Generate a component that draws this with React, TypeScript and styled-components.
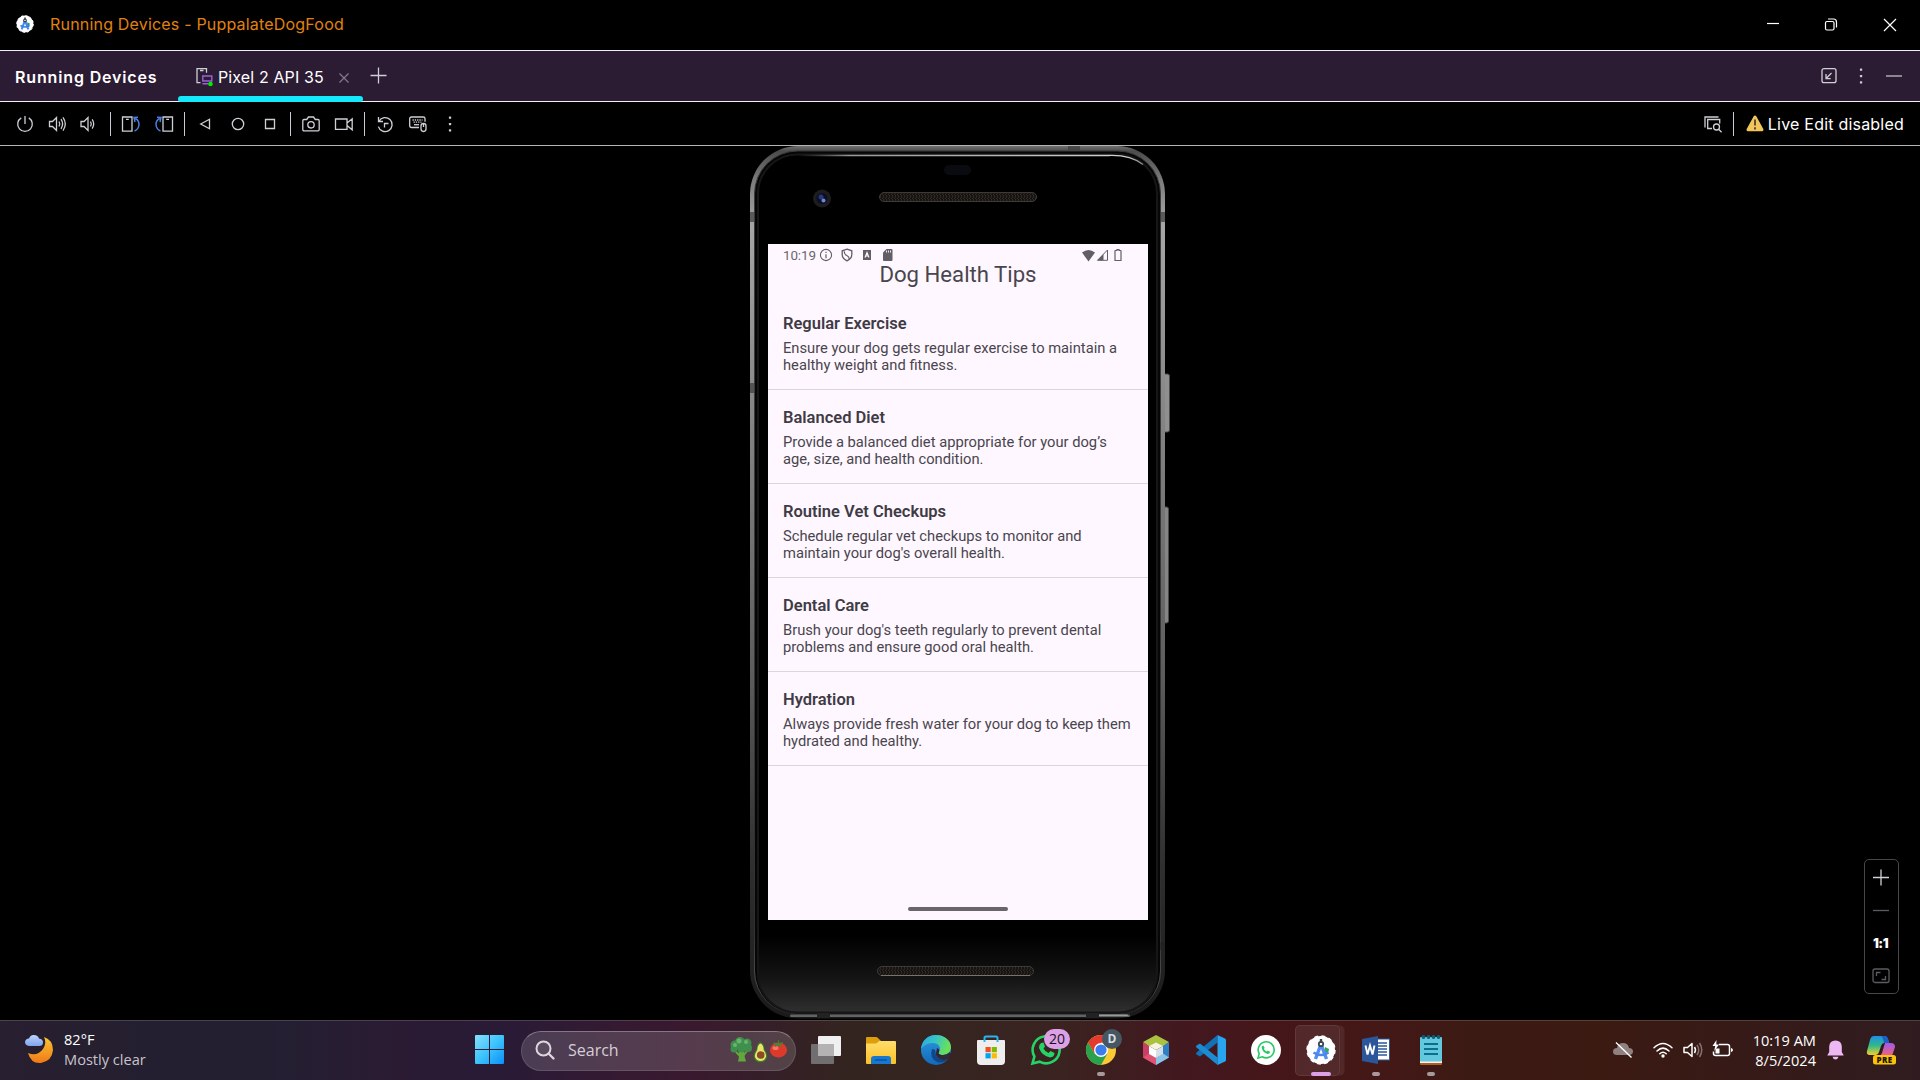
import React from "react";
import styled, { createGlobalStyle } from "styled-components";

const Global = createGlobalStyle`
  * { box-sizing: border-box; }
  html, body { margin: 0; padding: 0; background: #000; overflow: hidden; }
`;

const ui = `Inter, "Liberation Sans", sans-serif`;
const win = `"Open Sans", "Noto Sans", sans-serif`;

const Desktop = styled.div`
  width: 1920px;
  height: 1080px;
  display: flex;
  flex-direction: column;
  background: #000;
  overflow: hidden;
`;

const TitleBar = styled.header`
  height: 51px;
  flex: none;
  display: flex;
  align-items: center;
  padding: 0 23px 2px 16px;
  border-bottom: 1px solid #f2eff3;
`;

const Label = styled.span<{ $size: number; $color?: string; $weight?: number; $ls?: number }>`
  font-family: ${ui};
  font-size: ${(p) => p.$size}px;
  font-weight: ${(p) => p.$weight ?? 400};
  letter-spacing: ${(p) => p.$ls ?? 0}px;
  color: ${(p) => p.$color ?? "#fff"};
  line-height: 20px;
  white-space: nowrap;
`;

const Title = styled(Label)`
  margin-left: 16px;
`;

const Spacer = styled.div`
  flex: 1;
`;

const WindowControls = styled.div`
  display: flex;
  gap: 42.5px;
  align-items: center;
`;

const Icon = styled.svg<{ $w?: number; $h?: number }>`
  display: block;
  flex: none;
  width: ${(p) => p.$w ?? 20}px;
  height: ${(p) => p.$h ?? p.$w ?? 20}px;
  overflow: visible;
`;

const TabBar = styled.nav`
  height: 51px;
  flex: none;
  display: flex;
  background: #2b1b33;
  border-bottom: 1px solid #f2eff3;
`;

const TabHeading = styled.div`
  width: 178px;
  padding: 16px 0 0 15px;
`;

const Tab = styled.div`
  width: 185px;
  height: 50px;
  display: flex;
  align-items: flex-start;
  padding: 16px 0 0 17px;
  position: relative;
  &::after {
    content: "";
    position: absolute;
    left: 0;
    right: 0;
    bottom: -1px;
    height: 6px;
    border-radius: 3px;
    background: #14e8fb;
  }
`;

const TabName = styled(Label)`
  margin-left: 3px;
  width: 119px;
`;

const AddTab = styled.div`
  padding: 16px 0 0 7px;
`;

const TabActions = styled.div`
  display: flex;
  gap: 12px;
  padding: 15px 17px 0 0;
`;

const ToolBar = styled.div`
  height: 44px;
  flex: none;
  display: flex;
  align-items: center;
  padding: 0 16px 0 8.75px;
  border-bottom: 1px solid #b5b5b5;
`;

const ToolSlot = styled.div`
  width: 32.5px;
  display: flex;
  justify-content: center;
`;

const DividerSlot = styled.div`
  width: 8.75px;
  display: flex;
  justify-content: center;
  &::before {
    content: "";
    width: 1px;
    height: 24px;
    background: #c9ccd6;
  }
`;

const LiveEdit = styled.div`
  display: flex;
  align-items: center;
  gap: 3px;
  margin-left: 7px;
`;

const Stage = styled.main`
  flex: 1;
  display: flex;
  justify-content: center;
  position: relative;
  min-height: 0;
`;

const Phone = styled.section`
  width: 420px;
  height: 874px;
  position: relative;
  padding: 98px 0 0 18px;
`;

const Skin = styled.svg`
  position: absolute;
  left: 0;
  top: 0;
`;

const Screen = styled.div`
  position: relative;
  width: 380px;
  height: 676px;
  background: #fef7ff;
  display: flex;
  flex-direction: column;
  font-family: Roboto, sans-serif;
  color: #49454d;
`;

const StatusBar = styled.div`
  height: 22px;
  display: flex;
  align-items: center;
  padding: 0 23px 0 15px;
  color: #6a666d;
`;

const Clock = styled.span`
  font-size: 13.4px;
  letter-spacing: -0.1px;
  width: 36px;
`;

const StatusIcons = styled.div<{ $gap: number }>`
  display: flex;
  gap: ${(p) => p.$gap}px;
  align-items: center;
`;

const ScreenTitle = styled.h1`
  margin: -6px 0 0;
  height: 29px;
  line-height: 28px;
  font-size: 22.17px;
  font-weight: 400;
  text-align: center;
`;

const TipList = styled.div`
  padding-top: 7px;
`;

const Tip = styled.article`
  height: 94px;
  padding: 18px 0 0 15px;
  border-bottom: 1px solid #dcd5de;
`;

const TipName = styled.h2`
  margin: 0;
  font-size: 16.5px;
  font-weight: 600;
  line-height: 20px;
  color: #3f3b44;
`;

const TipText = styled.p`
  margin: 6px 0 0;
  font-size: 14.72px;
  line-height: 17px;
  white-space: pre;
`;

const HomeBar = styled.div`
  margin: auto auto 9px;
  width: 100px;
  height: 4px;
  border-radius: 2px;
  background: #69656b;
`;

const ZoomPanel = styled.aside`
  position: absolute;
  right: 21px;
  top: 713px;
  width: 35px;
  height: 135px;
  border: 1px solid #47474a;
  border-radius: 5px;
  display: flex;
  flex-direction: column;
  align-items: center;
  padding: 8px 2px 0 0;
`;

const ZoomSlot = styled.div`
  height: 32.7px;
  flex: none;
  display: flex;
  align-items: flex-start;
`;

const TaskBar = styled.footer`
  height: 60px;
  flex: none;
  display: flex;
  align-items: center;
  padding-bottom: 1px;
  border-top: 1px solid rgba(255, 255, 255, 0.16);
  background: linear-gradient(90deg, #281f30 0, #231f30 180px, #231f31 270px, #2a1b33 400px, #291a36 500px, #321a33 590px, #39192e 690px, #351f28 770px, #33241f 850px, #352521 930px, #3a2320 1060px, #42181f 1180px, #451619 1290px, #441817 1370px, #3c1a14 1470px, #3b1a12 1600px, #361a17 1740px, #301c20 1920px);
  font-family: ${win};
  color: #fff;
`;

const Weather = styled.div`
  width: 462px;
  padding: 0 0 2px 24px;
  display: flex;
  gap: 10px;
  align-items: center;
`;

const TwoLines = styled.div<{ $right?: boolean }>`
  display: flex;
  flex-direction: column;
  text-align: ${(p) => (p.$right ? "right" : "left")};
  font-size: 14.6px;
  line-height: 20px;
  white-space: nowrap;
`;

const Muted = styled.span`
  color: #c9c3cb;
`;

const TaskSlot = styled.div`
  width: 55px;
  height: 58px;
  position: relative;
  display: flex;
  align-items: center;
  justify-content: center;
  padding-bottom: 1px;
`;

const Running = styled.i<{ $active?: boolean }>`
  position: absolute;
  bottom: 3px;
  left: 50%;
  width: ${(p) => (p.$active ? 20 : 8)}px;
  height: 4px;
  transform: translateX(-50%);
  border-radius: 2px;
  background: ${(p) => (p.$active ? "#dca0e6" : "#a89a9b")};
`;

const ActiveTile = styled.div`
  position: absolute;
  left: 2px;
  top: 4px;
  width: 45px;
  height: 51px;
  border-radius: 5px;
  background: rgba(255, 255, 255, 0.08);
  border: 1px solid rgba(255, 255, 255, 0.08);
  box-shadow: 5px 0 0 -0.5px rgba(255, 255, 255, 0.07);
`;

const Badge = styled.span<{ $x: number; $w: number; $bg: string; $fg: string; $size: number }>`
  position: absolute;
  top: 8px;
  left: ${(p) => p.$x}px;
  width: ${(p) => p.$w}px;
  height: 20px;
  border-radius: 10px;
  background: ${(p) => p.$bg};
  color: ${(p) => p.$fg};
  font-size: ${(p) => p.$size}px;
  line-height: 20px;
  text-align: center;
`;

const Search = styled.div`
  width: 275px;
  height: 40px;
  margin: 1px 2px 0 4px;
  border-radius: 20px;
  display: flex;
  align-items: center;
  padding: 0 8px 1px 13px;
  background: rgba(255, 255, 255, 0.15);
  border: 1px solid rgba(255, 255, 255, 0.12);
  border-top-color: rgba(255, 255, 255, 0.3);
`;

const SearchText = styled.span`
  margin-left: 13px;
  font-size: 16px;
  line-height: 20px;
  color: #d6ced6;
`;

const Tray = styled.div`
  display: flex;
  align-items: center;
  margin-left: auto;
  padding: 0 24px 1px 0;
`;

const TrayItem = styled.div<{ $ml: number }>`
  margin-left: ${(p) => p.$ml}px;
`;

const g = "#ced0d6";
const line = { fill: "none", stroke: g, strokeWidth: 1.3 } as const;

const StudioLogo = ({ size }: { size: number }) => (
  <Icon $w={size} viewBox="0 0 30 30">
    <circle cx="15" cy="15" r="14" fill="#fff" />
    <circle cx="15" cy="15" r="14" fill="none" stroke="#fff" strokeWidth="1.400" strokeDasharray="4 3.33" />
    <path d="M19 12l4 2-1 5-4 1z" fill="#24a148" />
    <path d="M15 9L9.500 24M15 9l5.500 15" stroke="#4285f4" strokeWidth="3.400" />
    <path d="M7.500 17.500q7.500 5 15 0" stroke="#3f7de8" strokeWidth="2.600" fill="none" />
    <circle cx="15" cy="9" r="2.200" fill="#fff" stroke="#30363d" strokeWidth="1.800" />
    <path d="M15 4v4" stroke="#30363d" strokeWidth="2.400" />
  </Icon>
);

const Power = () => (
  <Icon viewBox="0 0 20 20">
    <path d="M6.200 3.900a7.300 7.300 0 1 0 7.600 0M10 2v8" {...line} />
  </Icon>
);
const VolUp = () => (
  <Icon viewBox="0 0 20 20">
    <path d="M1.500 7.500h3l4-4v13l-4-4h-3zM11 7.500q1.600 2.500 0 5M13 5.200q3.200 4.800 0 9.600M15 3.400q4.600 6.600 0 13.200" {...line} />
  </Icon>
);
const VolDown = () => (
  <Icon viewBox="0 0 20 20">
    <path d="M1 7.500h3l4-4v13l-4-4h-3zM10.500 7.500q1.600 2.500 0 5M12.200 5.400q3 4.600 0 9.200" {...line} />
  </Icon>
);
const Rotate = ({ flip }: { flip?: boolean }) => (
  <Icon viewBox="0 0 20 20">
    <g transform={flip ? "translate(20 0) scale(-1 1)" : undefined}>
      <path d="M1.500 3h9.500v14.200h-9.500zM5 5.300h2.800" {...line} />
      <path d="M13.500 17q4-1.500 4.500-6.500 0-4.500-4-6M17 3.200l-4 .3 1 4.500" fill="none" stroke="#4a7fe0" strokeWidth="1.500" />
    </g>
  </Icon>
);
const Back = () => (
  <Icon viewBox="0 0 20 20"><path d="M5.700 10l8.800-4.700v9.400z" {...line} /></Icon>
);
const HomeCircle = () => (
  <Icon viewBox="0 0 20 20"><circle cx="10" cy="10" r="5.700" {...line} /></Icon>
);
const Overview = () => (
  <Icon viewBox="0 0 20 20"><path d="M5.500 5.500h9v9h-9z" {...line} /></Icon>
);
const Camera = () => (
  <Icon viewBox="0 0 20 20">
    <path d="M3 5.500h2.700l1.800-2.500h5l1.800 2.500h2.700q1.200 0 1.200 1.200v8.800q0 1.300-1.200 1.300h-14q-1.200 0-1.200-1.300v-8.800q0-1.200 1.200-1.200z" {...line} />
    <circle cx="10" cy="10.800" r="3.200" {...line} />
  </Icon>
);
const Video = () => (
  <Icon viewBox="0 0 20 20">
    <path d="M1.500 5h11.500v10.300h-11.500zM13 9l5.200-4.200v11l-5.200-4.300" {...line} />
  </Icon>
);
const Reset = () => (
  <Icon viewBox="0 0 20 20">
    <path d="M4 7.200a7 7 0 1 1-.6 5.400M3.500 3v4.500h4.500M9.500 13.500v-4h4" {...line} />
  </Icon>
);
const Keyboard = () => (
  <Icon viewBox="0 0 20 20">
    <path d="M11 13.500h-7.500q-1.800 0-1.800-1.800v-6.900q0-1.800 1.800-1.800h11.700q1.800 0 1.800 1.800v3" {...line} />
    <path d="M4.500 6h10M5.500 8.200h8" {...line} strokeDasharray="1.300 1" />
    <path d="M6 10.700h5" {...line} />
    <rect x="13" y="9.500" width="5" height="8" rx="2.400" {...line} />
    <path d="M15.500 10v3" {...line} />
  </Icon>
);
const Dots = () => (
  <Icon viewBox="0 0 20 20">
    <g fill={g}>
      <rect x="8.900" y="2.500" width="2.300" height="2.300" rx=".6" />
      <rect x="8.900" y="8.900" width="2.300" height="2.300" rx=".6" />
      <rect x="8.900" y="15.200" width="2.300" height="2.300" rx=".6" />
    </g>
  </Icon>
);

const tips = [
  ["Regular Exercise", "Ensure your dog gets regular exercise to maintain a\nhealthy weight and fitness."],
  ["Balanced Diet", "Provide a balanced diet appropriate for your dog’s\nage, size, and health condition."],
  ["Routine Vet Checkups", "Schedule regular vet checkups to monitor and\nmaintain your dog's overall health."],
  ["Dental Care", "Brush your dog's teeth regularly to prevent dental\nproblems and ensure good oral health."],
  ["Hydration", "Always provide fresh water for your dog to keep them\nhydrated and healthy."],
];

const PhoneSkin = () => (
  <Skin width="420" height="874" viewBox="0 0 420 874">
    <defs>
      <linearGradient id="metal" x1="0" y1="0" x2="0" y2="1">
        <stop offset="0" stopColor="#707070" />
        <stop offset=".006" stopColor="#4c4c4c" />
        <stop offset=".04" stopColor="#7c7c7c" />
        <stop offset=".09" stopColor="#a6a6a6" />
        <stop offset=".3" stopColor="#868686" />
        <stop offset=".6" stopColor="#5d5d5d" />
        <stop offset=".82" stopColor="#303030" />
        <stop offset="1" stopColor="#1a1a1a" />
      </linearGradient>
      <linearGradient id="inner" x1="0" y1="0" x2="0" y2="1">
        <stop offset="0" stopColor="#3a3a3a" />
        <stop offset=".3" stopColor="#3a3a3a" />
        <stop offset=".9" stopColor="#303030" />
        <stop offset=".96" stopColor="#4a4d50" />
        <stop offset="1" stopColor="#2a2a2a" />
      </linearGradient>
      <linearGradient id="glass" x1="0" y1="0" x2="0" y2="1">
        <stop offset="0" stopColor="#000" />
        <stop offset=".91" stopColor="#000" />
        <stop offset=".96" stopColor="#141414" />
        <stop offset="1" stopColor="#2f2f2f" />
      </linearGradient>
      <linearGradient id="shine" x1="0" y1="0" x2="1" y2="0">
        <stop offset="0" stopColor="#777" stopOpacity="0" />
        <stop offset=".15" stopColor="#999" />
        <stop offset=".95" stopColor="#cfd4d6" />
        <stop offset="1" stopColor="#888" />
      </linearGradient>
      <pattern id="mesh" width="3" height="4" patternUnits="userSpaceOnUse">
        <rect width="3" height="4" fill="#15120f" />
        <path d="M0 0l2 2-1 2" stroke="#3a342f" strokeWidth=".8" fill="none" />
      </pattern>
    </defs>
    <path d="M413.500 228h4q2 0 2 2v54q0 2-2 2h-4z" fill="#8f8f8f" stroke="#4a4a4a" />
    <path d="M413.500 361h3q2 0 2 2v112q0 2-2 2h-3z" fill="#858585" stroke="#4a4a4a" />
    <rect x="0" y="0" width="415" height="872.500" rx="48" fill="url(#metal)" />
    <rect x="4.500" y="5" width="406" height="863" rx="43" fill="#060606" stroke="url(#inner)" strokeWidth="1" />
    <rect x="8" y="8.500" width="399" height="858" rx="39" fill="url(#glass)" stroke="#161616" strokeWidth="2" />
    <rect x="40" y="868.500" width="340" height="2.500" rx="1.200" fill="#636363" />
    <rect x="340" y="868.500" width="38" height="1.500" rx=".7" fill="#9a9a9a" />
    <path d="M48 9.500h310q22-1 35 9" stroke="url(#shine)" strokeWidth="1.300" fill="none" />
    <path d="M0 66h5v10h-5zM0 237h5v10h-5zM410.500 66h4.500v10h-4.500zM318 0h12v4h-12z" fill="#3c3c3c" fillOpacity=".7" />
    <path d="M410.500 796h4.500v8h-4.500zM67 867h13v5h-13zM336 867h13v5h-13z" fill="#222" />
    <rect x="194" y="19" width="27" height="10" rx="5" fill="#0a0b10" />
    <circle cx="72" cy="52.500" r="9" fill="#1d1d1f" />
    <circle cx="72" cy="52.500" r="5.500" fill="#0b0f25" />
    <circle cx="71" cy="51" r="2.500" fill="#283878" />
    <circle cx="73.500" cy="54.500" r="2" fill="#7285cf" />
    <rect x="129.500" y="46.500" width="157" height="9" rx="4.500" fill="url(#mesh)" stroke="#3d3b38" />
    <rect x="127.500" y="820.500" width="156" height="9" rx="4.500" fill="url(#mesh)" stroke="#3d3b38" />
    <path d="M131 829.500h149" stroke="#77736e" />
  </Skin>
);

export default function App() {
  return (
    <Desktop>
      <Global />
      <TitleBar>
        <StudioLogo size={18} />
        <Title $size={16} $color="#e0820f" $ls={0.19}>Running Devices - PuppalateDogFood</Title>
        <Spacer />
        <WindowControls>
          <Icon $w={16} viewBox="0 0 16 16"><path d="M3 7.500h12" stroke="#fff" strokeWidth="1.200" /></Icon>
          <Icon $w={16} viewBox="0 0 16 16">
            <rect x="2.500" y="5.500" width="8.500" height="8.500" rx="1.500" fill="none" stroke="#fff" strokeWidth="1.200" />
            <path d="M5 3h5.500q3 0 3 3v5.500" fill="none" stroke="#fff" strokeWidth="1.200" />
          </Icon>
          <Icon $w={16} viewBox="0 0 16 16"><path d="M3 3l12 12M15 3l-12 12" stroke="#fff" strokeWidth="1.200" /></Icon>
        </WindowControls>
      </TitleBar>

      <TabBar>
        <TabHeading><Label $size={16} $weight={600} $ls={0.85}>Running Devices</Label></TabHeading>
        <Tab>
          <Icon viewBox="0 0 20 20">
            <path d="M5.500 15.700h-3.500v-14h9.500v4M5 3.500h3.500" {...line} />
            <path d="M7.800 9h9v5h-9zM7.500 16.800h6" fill="none" stroke="#9a63d6" strokeWidth="1.400" />
            <circle cx="15.500" cy="17" r="2.300" fill="#00ee00" />
          </Icon>
          <TabName $size={16} $ls={0.12}>Pixel 2 API 35</TabName>
          <Icon viewBox="0 0 20 20"><path d="M2.500 6.500l9 9M11.500 6.500l-9 9" stroke="#84798c" strokeWidth="1.200" /></Icon>
        </Tab>
        <AddTab>
          <Icon viewBox="0 0 20 20"><path d="M.5 8.500h16M8.500 .5v16" stroke="#ced0d6" strokeWidth="1.300" /></Icon>
        </AddTab>
        <Spacer />
        <TabActions>
          <Icon viewBox="0 0 20 20">
            <rect x="3" y="2.700" width="14" height="14" rx="2" {...line} />
            <path d="M12.500 7l-5.200 5.200M7 8v4.700h4.700" {...line} />
          </Icon>
          <Dots />
          <Icon viewBox="0 0 20 20"><path d="M3 10h16" stroke="#a59fab" strokeWidth="1.600" /></Icon>
        </TabActions>
      </TabBar>

      <ToolBar>
        <ToolSlot><Power /></ToolSlot>
        <ToolSlot><VolUp /></ToolSlot>
        <ToolSlot><VolDown /></ToolSlot>
        <DividerSlot />
        <ToolSlot><Rotate /></ToolSlot>
        <ToolSlot><Rotate flip /></ToolSlot>
        <DividerSlot />
        <ToolSlot><Back /></ToolSlot>
        <ToolSlot><HomeCircle /></ToolSlot>
        <ToolSlot><Overview /></ToolSlot>
        <DividerSlot />
        <ToolSlot><Camera /></ToolSlot>
        <ToolSlot><Video /></ToolSlot>
        <DividerSlot />
        <ToolSlot><Reset /></ToolSlot>
        <ToolSlot><Keyboard /></ToolSlot>
        <ToolSlot><Dots /></ToolSlot>
        <Spacer />
        <ToolSlot>
          <Icon viewBox="0 0 20 20">
            <path d="M2 13.500v-10.500h13.500" {...line} />
            <path d="M9 14.500h-4.300v-9h12v4" {...line} />
            <circle cx="13.500" cy="13" r="3" {...line} />
            <path d="M15.600 15.200l3 3" {...line} />
          </Icon>
        </ToolSlot>
        <DividerSlot />
        <LiveEdit>
          <Icon viewBox="0 0 20 20">
            <path d="M10 3L17 15.800h-14z" fill="#f2c55c" stroke="#f2c55c" strokeWidth="3" strokeLinejoin="round" />
            <path d="M10 5.500v6M10 13.300v2.200" stroke="#5e4d33" strokeWidth="2" />
          </Icon>
          <Label $size={16} $ls={0.21}>Live Edit disabled</Label>
        </LiveEdit>
      </ToolBar>

      <Stage>
        <Phone>
          <PhoneSkin />
          <Screen>
            <StatusBar>
              <Clock>10:19</Clock>
              <StatusIcons $gap={6.5}>
                <Icon $w={14} viewBox="0 0 14 14">
                  <circle cx="7" cy="7" r="5.600" fill="none" stroke="#625e66" strokeWidth="1.100" />
                  <path d="M7 6.300v4M7 3.800v1.300" stroke="#625e66" strokeWidth="1.200" />
                </Icon>
                <Icon $w={14} viewBox="0 0 14 14">
                  <path d="M7 1.200l4.800 1.600v3.700q0 4-4.800 6.300-4.800-2.300-4.800-6.300v-3.700z" fill="none" stroke="#625e66" strokeWidth="1.300" />
                  <path d="M4.200 3.200q-.2 3 2.600 4.300 2.500 1.200 2.500 3.800" fill="none" stroke="#625e66" strokeWidth="1.200" />
                </Icon>
                <Icon $w={14} viewBox="0 0 14 14">
                  <rect x="3" y="2" width="8" height="10" fill="#625e66" />
                  <path d="M5 9.500L7 4.500l2 5M5.700 8h2.600" fill="none" stroke="#fef7ff" strokeWidth="1.100" />
                </Icon>
                <Icon $w={14} viewBox="0 0 14 14">
                  <path d="M5.500 1h5q1 0 1 1v10q0 1-1 1h-7.500q-1 0-1-1v-7.500z" fill="#625e66" />
                  <path d="M5.500 2.500v2M7.500 2.500v2M9.500 2.500v2" stroke="#fef7ff" strokeWidth=".9" />
                </Icon>
              </StatusIcons>
              <Spacer />
              <StatusIcons $gap={2}>
                <Icon $w={13} viewBox="0 0 13 13"><path d="M0 3.500q6.500-5 13 0L6.500 12.500z" fill="#625e66" /></Icon>
                <Icon $w={12} viewBox="0 0 12 12"><path d="M10.500 1v10.300h-10z" fill="none" stroke="#625e66" /><path d="M6.500 5v6.300h-6z" fill="#625e66" /></Icon>
                <Icon $w={14} $h={12} viewBox="0 0 14 12"><path d="M5 1.500h1v-1h2v1h1.500q.5 0 .5.500v9.500h-6v-9.500q0-.5.500-.5z" fill="none" stroke="#625e66" strokeWidth="1.200" /></Icon>
              </StatusIcons>
            </StatusBar>
            <ScreenTitle>Dog Health Tips</ScreenTitle>
            <TipList>
              {tips.map(([name, text]) => (
                <Tip key={name}>
                  <TipName>{name}</TipName>
                  <TipText>{text}</TipText>
                </Tip>
              ))}
            </TipList>
            <HomeBar />
          </Screen>
        </Phone>
        <ZoomPanel>
          <ZoomSlot><Icon viewBox="0 0 20 20"><path d="M2 9.500h16M10 1.500v16" stroke="#ced0d6" strokeWidth="1.300" /></Icon></ZoomSlot>
          <ZoomSlot><Icon viewBox="0 0 20 20"><path d="M2 9.500h16" stroke="#5a5c61" strokeWidth="1.300" /></Icon></ZoomSlot>
          <ZoomSlot><Label $size={13} $weight={900} $ls={-0.5}>1:1</Label></ZoomSlot>
          <ZoomSlot>
            <Icon viewBox="0 0 20 20">
              <rect x="2" y="3" width="16" height="13.500" rx="2" fill="none" stroke="#5a5c61" strokeWidth="1.300" />
              <path d="M5.500 10v-3.500h4M14.500 10v3.500h-4" fill="none" stroke="#5a5c61" strokeWidth="1.300" />
            </Icon>
          </ZoomSlot>
        </ZoomPanel>
      </Stage>

      <TaskBar>
        <Weather>
          <Icon $w={30} viewBox="0 0 30 30">
            <defs>
              <linearGradient id="moon" x1="0" y1="0" x2="0" y2="1"><stop offset="0" stopColor="#f8c830" /><stop offset="1" stopColor="#f07818" /></linearGradient>
              <linearGradient id="cloud" x1="0" y1="0" x2="0" y2="1"><stop offset="0" stopColor="#bcd2fb" /><stop offset="1" stopColor="#7fa5ee" /></linearGradient>
            </defs>
            <path d="M20 3q9 3 9 13-1 11-12 13-10 1-13-10 9 4 15-4 4-6 1-12z" fill="url(#moon)" />
            <path d="M5 12q-4-.5-4-4 .5-3.500 4-3.500 1.500-4 5-3.500 4 0 5 3.500 4 .5 4 4 0 3.500-4 3.500z" fill="url(#cloud)" />
          </Icon>
          <TwoLines><span>82°F</span><Muted>Mostly clear</Muted></TwoLines>
        </Weather>
        <TaskSlot>
          <Icon $w={29} viewBox="0 0 29 29">
            <defs><linearGradient id="start" x1="0" y1="0" x2="1" y2="1"><stop offset="0" stopColor="#87e0fc" /><stop offset=".5" stopColor="#3cc4fb" /><stop offset="1" stopColor="#0c8ffa" /></linearGradient></defs>
            <path d="M0 1q0-1 1-1h13v14h-14zM15 0h13q1 0 1 1v13h-14zM0 15h14v14h-13q-1 0-1-1zM15 15h14v13q0 1-1 1h-13z" fill="url(#start)" />
          </Icon>
        </TaskSlot>
        <Search>
          <Icon $w={20} viewBox="0 0 20 20"><circle cx="8.500" cy="8.500" r="7" fill="rgba(255,255,255,.08)" stroke="#ddd6dd" strokeWidth="2" /><path d="M13.500 13.500l5 5" stroke="#ddd6dd" strokeWidth="2.400" strokeLinecap="round" /></Icon>
          <SearchText>Search</SearchText>
          <Spacer />
          <Icon $w={58} $h={26} viewBox="0 0 58 26">
            <path d="M9 12h6q0 7 2 12.500h-8q2-6 0-12.500z" fill="#63a83c" />
            <path d="M7 15l4 4M18 14l-4 5" stroke="#63a83c" strokeWidth="2" />
            <g fill="#3f8f4d"><circle cx="6" cy="8" r="4.500" /><circle cx="11" cy="5" r="5" /><circle cx="18" cy="6" r="4.500" /><circle cx="19" cy="11" r="4" /><circle cx="5" cy="12" r="3.500" /><circle cx="12.500" cy="11" r="4.500" /></g>
            <g fill="#69b56f"><circle cx="10" cy="4" r="2.500" /><circle cx="17" cy="5" r="2" /><circle cx="6" cy="8" r="2" /></g>
            <path d="M31.500 5q3.500 1 4 7 3.500 5 2.500 9-2 4.500-6.500 4.500t-6.500-4.500q-1-4 2.500-9 .5-6 4-7z" fill="#3c7a27" />
            <path d="M31.500 6.500q3 1 3.200 6.500 3 4 2.300 7-1.500 4-5.500 4t-5.500-4q-.7-3 2.300-7 .2-5.500 3.200-6.500z" fill="#e8e36a" />
            <circle cx="31.700" cy="18" r="3.800" fill="#8a4b26" />
            <ellipse cx="49.500" cy="13" rx="8.500" ry="7.500" fill="#dd3a2c" />
            <ellipse cx="46.500" cy="11" rx="3" ry="2" fill="#f4796a" />
            <path d="M49.500 3v4M44.500 6l5 1L54 5.500 51 7.500l1 2-3-1.500-3 1.500 1-2z" fill="#3c8a36" stroke="#3c8a36" strokeWidth=".8" />
          </Icon>
        </Search>

        <TaskSlot>
          <Icon $w={30} $h={28} viewBox="0 0 30 28">
            <rect x="7" y="0" width="23" height="20" rx="1" fill="#f0f0f0" />
            <rect x="0" y="8" width="23" height="20" rx="1" fill="#777" fillOpacity=".9" />
            <rect x="7" y="8" width="16" height="12" fill="#b4b2b2" />
          </Icon>
        </TaskSlot>
        <TaskSlot>
          <Icon $w={30} viewBox="0 0 30 30">
            <defs><linearGradient id="fold" x1="0" y1="0" x2="0" y2="1"><stop offset="0" stopColor="#ffdd6b" /><stop offset="1" stopColor="#fcc124" /></linearGradient></defs>
            <path d="M0 3q0-1 1-1h9q1 0 2 1l3 3v6h-15z" fill="#dd9d0c" />
            <path d="M0 8.500h10l3.500-2.500h15.500q1 0 1 1v21q0 1-1 1h-28q-1 0-1-1z" fill="url(#fold)" />
            <path d="M5 29v-5q0-3 3-3h14q3 0 3 3v5z" fill="#1778cf" />
            <path d="M9 25h12" stroke="#0c4f93" strokeWidth="1.300" />
          </Icon>
        </TaskSlot>
        <TaskSlot>
          <Icon $w={30} viewBox="0 0 30 30">
            <defs>
              <linearGradient id="edgeA" x1="0" y1="0" x2="1" y2=".3"><stop offset="0" stopColor="#2aa5e5" /><stop offset=".5" stopColor="#37c4c7" /><stop offset="1" stopColor="#6ae05a" /></linearGradient>
              <linearGradient id="edgeB" x1="0" y1="0" x2="0" y2="1"><stop offset="0" stopColor="#2a9ae0" /><stop offset="1" stopColor="#1469b8" /></linearGradient>
            </defs>
            <circle cx="15" cy="15" r="15" fill="url(#edgeB)" />
            <path d="M0 14C1 5 7 0 15 0c9 0 15 6 15 12 0 5-4 8-8 8-4 0-5-1.500-4-3 3-5-1-9-6-9-6 0-10 3-12 6z" fill="url(#edgeA)" />
            <path d="M11 14q-3 9 5 13 7 2 11.500-3.500-4 2-8.500.5-5-2-4.500-7 0-3-3.500-3z" fill="#10478c" />
            <path d="M19 19.500q5 2 10-2.500l1.500 3-2.500 3.500q-5 2.500-9 .5-4-2-4.300-5.500z" fill="#33242a" fillOpacity=".9" />
            <path d="M16 13q3 1 2 4-2 3 4 3.200-5 3-7-2z" fill="#33242a" />
          </Icon>
        </TaskSlot>
        <TaskSlot>
          <Icon $w={30} viewBox="0 0 30 30">
            <path d="M8.500 8V3q0-1.500 1.500-1.500h10q1.500 0 1.500 1.500v5" fill="none" stroke="#2bb4ef" strokeWidth="2" />
            <path d="M1 6q0-1 1-1h26q1 0 1 1v20q0 4-4 4h-20q-4 0-4-4z" fill="#eee" />
            <path d="M8.500 7V5M21.500 7V5" stroke="#2bb4ef" strokeWidth="2" />
            <path d="M9.500 12h5.200v5.200H9.500z" fill="#f25022" /><path d="M15.700 12h5.200v5.200h-5.200z" fill="#7fba00" />
            <path d="M9.500 18.200h5.200v5.200H9.500z" fill="#00a4ef" /><path d="M15.700 18.200h5.200v5.200h-5.200z" fill="#ffb900" />
          </Icon>
        </TaskSlot>
        <TaskSlot>
          <Icon $w={30} viewBox="0 0 30 30">
            <path d="M1.500 28.500l1.900-7A13.500 13.500 0 1 1 8.700 26.700z" fill="none" stroke="#25d366" strokeWidth="2.600" />
            <path d="M10 8l2.500-.5 1.500 4-1.500 2q1.500 3 5 4.500l2-2 4 2q0 4-4.500 4.500Q11 21 8 13q-.500-3 2-5z" fill="#25d366" />
          </Icon>
          <Badge $x={26} $w={26} $bg="#dca0e6" $fg="#1a101c" $size={14}>20</Badge>
        </TaskSlot>
        <TaskSlot>
          <Icon $w={30} viewBox="0 0 30 30">
            <circle cx="15" cy="15" r="15" fill="#fcc934" />
            <path d="M2 7.500A15 15 0 0 1 28 7.500H15L8.500 18.500z" fill="#e33b2e" />
            <path d="M2 7.500A15 15 0 0 0 15 30l6.500-11.500h-13z" fill="#2aa24b" />
            <circle cx="15" cy="15" r="7" fill="#fff" /><circle cx="15" cy="15" r="5.600" fill="#3b7ded" />
          </Icon>
          <Badge $x={29} $w={20} $bg="#455763" $fg="#d5dde1" $size={12}><b>D</b></Badge>
          <Running />
        </TaskSlot>
        <TaskSlot>
          <Icon $w={26} $h={30} viewBox="0 0 26 30">
            <path d="M13 0l13 7-6 4.500-7-3.500-7 3.500L0 7z" fill="#aac240" />
            <path d="M0 7l6 4v8l7 4v7L0 22.500z" fill="#c93e63" />
            <path d="M26 7l-6 4v8l-7 4v7l13-7.500z" fill="#2f7fc4" />
            <path d="M0 22.500l6-4 7 4.500v7z" fill="#df5272" /><path d="M26 22.500l-6-4-7 4.500v7z" fill="#8cc4e8" />
            <path d="M13 7.500l7 3.500-7 4-7-4z" fill="#f4f4e0" /><path d="M6 11l7 4v8l-7-4z" fill="#fff" /><path d="M20 11l-7 4v8l7-4z" fill="#d5e0e8" />
          </Icon>
        </TaskSlot>
        <TaskSlot>
          <Icon $w={30} viewBox="0 0 30 30">
            <path d="M21.500 0v7.500L4 21.500l-3.500-2q-1-1 0-2z" fill="#1272b8" />
            <path d="M21.500 30v-7.500L4 8.500l-3.500 2q-1 1 0 2z" fill="#1b8bd4" />
            <path d="M21.500 0L29 3.500q1 .5 1 1.500v20q0 1-1 1.500L21.500 30z" fill="#27a5ef" />
          </Icon>
        </TaskSlot>
        <TaskSlot>
          <Icon $w={30} viewBox="0 0 30 30">
            <circle cx="15" cy="15" r="15" fill="#fff" />
            <path d="M7 23l1.200-4.300A8 8 0 1 1 11.300 21.800z" fill="none" stroke="#2bc866" strokeWidth="1.600" />
            <path d="M12.200 10.500l1.500 2.300-.8 1.200q1 1.800 2.800 2.600l1.200-1 2.300 1.300q-.5 2-2.600 2-5-1.200-6-6.400 0-1.500 1.600-2z" fill="#2bc866" />
          </Icon>
        </TaskSlot>
        <TaskSlot>
          <ActiveTile />
          <StudioLogo size={30} />
          <Running $active />
        </TaskSlot>
        <TaskSlot>
          <Icon $w={28} $h={28} viewBox="0 0 28 28">
            <rect x="13" y="3" width="14.500" height="21" fill="#fff" stroke="#2b579a" />
            <path d="M16 7h9M16 10h9M16 13h9M16 16h9M16 19h9" stroke="#2b579a" strokeWidth="1.300" />
            <path d="M0 3l16-3v28L0 25z" fill="#2b579a" />
            <path d="M3.500 9.500l2 9 2.500-9 2.500 9 2-9" fill="none" stroke="#fff" strokeWidth="1.900" />
          </Icon>
          <Running />
        </TaskSlot>
        <TaskSlot>
          <Icon $w={22} $h={30} viewBox="0 0 22 30">
            <rect x="0" y="24" width="22" height="6" rx="1" fill="#b35c1e" />
            <rect x="0" y="24" width="22" height="4" fill="#f1f1f1" />
            <rect x="0" y="2" width="22" height="24.500" rx="1" fill="#62c8de" />
            <path d="M4 9h14M4 14h14M4 19h14" stroke="#0a6e8c" strokeWidth="1.800" />
            <g fill="#0d5f7a"><circle cx="3.500" cy="2" r="1.900" /><circle cx="8.500" cy="2" r="1.900" /><circle cx="13.500" cy="2" r="1.900" /><circle cx="18.500" cy="2" r="1.900" /></g>
          </Icon>
          <Running />
        </TaskSlot>

        <Tray>
          <TrayItem $ml={0}>
            <Icon $w={20} viewBox="0 0 20 20">
              <path d="M4 15q-4 0-4-3.500T4 8q1-5 6-5t6 5q4 .3 4 3.500T16 15z" fill="#8f817f" />
              <path d="M3 2.500l15.500 15" stroke="#fff" strokeWidth="1.400" />
            </Icon>
          </TrayItem>
          <TrayItem $ml={20}>
            <Icon $w={20} viewBox="0 0 20 20">
              <path d="M1 7.800q9-8.600 18 0M4 11q6-5.800 12 0M6.800 13.800q3.200-3 6.400 0" fill="none" stroke="#fff" strokeWidth="1.500" strokeLinecap="round" />
              <circle cx="10" cy="16" r="1.700" fill="#fff" />
            </Icon>
          </TrayItem>
          <TrayItem $ml={10}>
            <Icon $w={20} viewBox="0 0 20 20">
              <path d="M1 7.500h3.500l4.500-4v13l-4.500-4h-3.500zM11.500 7q2 3 0 6" fill="none" stroke="#fff" strokeWidth="1.500" strokeLinejoin="round" />
              <path d="M14 4.800q3.500 5.200 0 10.400M16.500 3q4.500 7 0 14" fill="none" stroke="#84706e" strokeWidth="1.500" />
            </Icon>
          </TrayItem>
          <TrayItem $ml={9}>
            <Icon $w={21} $h={20} viewBox="0 0 21 20">
              <path d="M7 4.500h8.500q2 0 2 2v7q0 2-2 2h-12q-2 0-2-2v-2" fill="none" stroke="#fff" strokeWidth="1.500" />
              <path d="M19 8q2 .3 2 2t-2 2zM3.500 8.500h4v5h-4z" fill="#fff" />
              <path d="M4.500 0l-4 6h2.700l-1 5L7 4.500h-2.700z" fill="#fff" />
            </Icon>
          </TrayItem>
          <TrayItem $ml={20}><TwoLines $right><span>10:19 AM</span><span>8/5/2024</span></TwoLines></TrayItem>
          <TrayItem $ml={11}>
            <Icon $w={17} $h={20} viewBox="0 0 17 20">
              <path d="M8.500 .5q6 0 6.300 6v5.500l2 3.500h-16.600l2-3.500v-5.500q.3-6 6.300-6zM5.500 16.800h6q-.6 2.700-3 2.700t-3-2.700z" fill="#edb8f3" />
            </Icon>
          </TrayItem>
          <TrayItem $ml={22}>
            <Icon $w={30} viewBox="0 0 30 30">
              <defs>
                <linearGradient id="copA" x1="0" y1="0" x2="0" y2="1"><stop offset="0" stopColor="#1f8fe8" /><stop offset=".5" stopColor="#2fb98a" /><stop offset="1" stopColor="#f3d02c" /></linearGradient>
                <linearGradient id="copB" x1="0" y1="0" x2="0" y2="1"><stop offset="0" stopColor="#a05be8" /><stop offset="1" stopColor="#f0627f" /></linearGradient>
              </defs>
              <path d="M8 1h11q2 0 3 3l1 4h-5q-2 0-3 3l-2 6q-1 3-4 3H4q-4 0-3-4L4 5q1-4 4-4z" fill="url(#copA)" />
              <path d="M15 1h4q2 0 3 3l1.300 4H18q-1-6-3-7z" fill="#1c5fc8" />
              <path d="M19 8h6q4 0 4 4l-3 9h-13q2 0 3-3z" fill="url(#copB)" />
              <rect x="7" y="20" width="23" height="9.500" rx="2.500" fill="#fcc30b" />
              <text x="18.500" y="27.600" textAnchor="middle" fontFamily="Open Sans, sans-serif" fontWeight="800" fontSize="8" letterSpacing=".4" fill="#1d1606">PRE</text>
            </Icon>
          </TrayItem>
        </Tray>
      </TaskBar>
    </Desktop>
  );
}
